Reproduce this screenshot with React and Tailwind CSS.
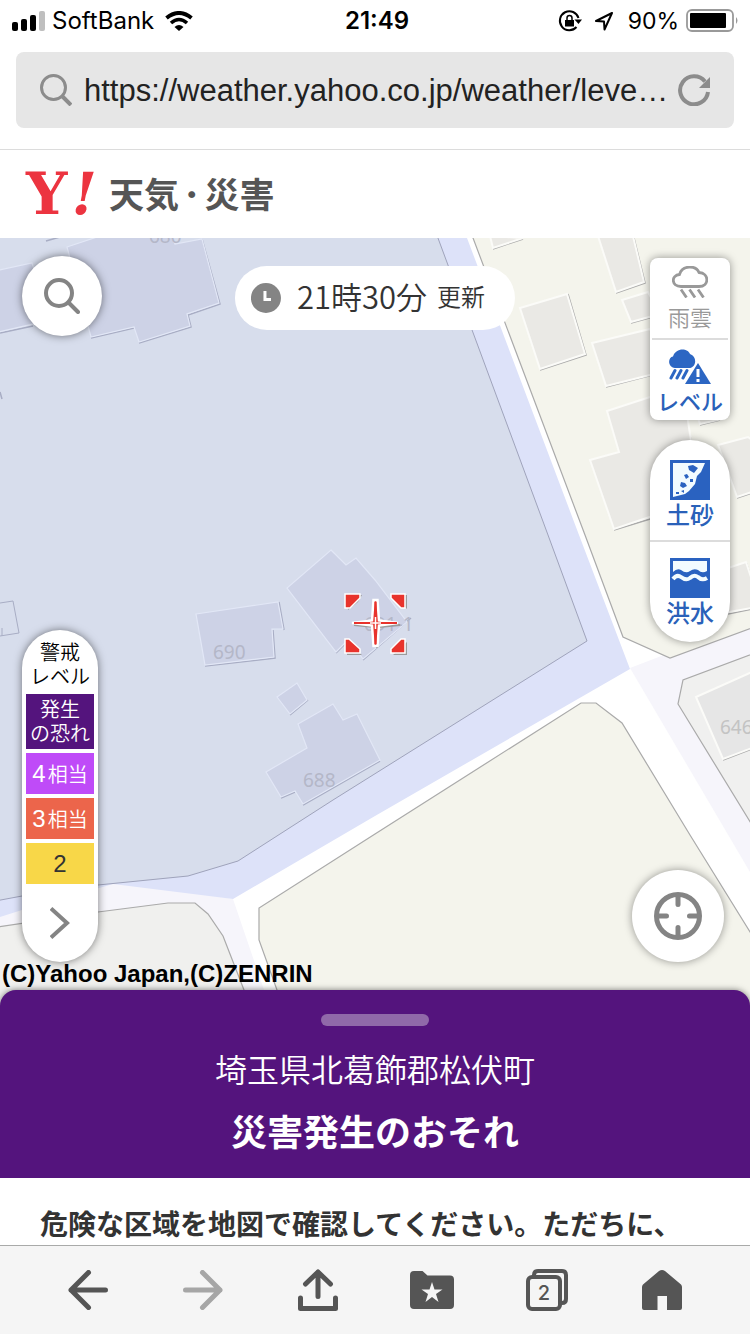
import React, { useState } from 'react';

const levels = [
  { label: ['発生', 'の恐れ'], box: 'h-[55px] pb-0.5 bg-[#54147d] text-white text-[20px] leading-6 font-[350]' },
  { num: '4', text: '相当', box: 'h-[41px] bg-[#bf4bf8] text-white' },
  { num: '3', text: '相当', box: 'h-[41px] bg-[#ec654b] text-white' },
  { num: '2', box: 'h-[41px] bg-[#f8d748] text-[#333]' },
];

const StatusBar = () => (
  <div className="grid grid-cols-3 items-center h-10 pt-0.5 px-3 font-['Inter','Noto_Sans_CJK_JP',sans-serif] text-[24px] text-black">
    <div className="flex items-center gap-[7px]">
      <svg className="w-[33px] h-5" viewBox="0 0 33 20">
        <rect x="0" y="11" width="6" height="9" rx="2" />
        <rect x="9" y="8" width="6" height="12" rx="2" />
        <rect x="18" y="4" width="6" height="16" rx="2" />
        <rect x="27" y="0" width="6" height="20" rx="2" fill="#bfbfbf" />
      </svg>
      <span>SoftBank</span>
      <svg className="w-7 h-5 ml-1" viewBox="0 0 28 20">
        <path d="M1.500 7 Q14 -3 26.500 7" fill="none" stroke="#000" strokeWidth="4" />
        <path d="M6 12 Q14 5 22 12" fill="none" stroke="#000" strokeWidth="3.600" />
        <path d="M9.500 16 Q14 12 18.500 16 L14 20Z" />
      </svg>
    </div>
    <div className="pl-1 text-center font-semibold">21:49</div>
    <div className="flex items-center justify-end">
      <svg className="w-6 h-6 mr-3" viewBox="0 0 24 24">
        <path d="M20.500 9 A9.500 9.500 0 1 0 18.500 18" fill="none" stroke="#000" strokeWidth="2" />
        <path d="M16.500 10.500 H24 L20.500 15Z" />
        <path d="M7 11 h9 v6.500 h-9z" />
        <path d="M9 11 V9 a2.500 2.500 0 0 1 5 0 V11" fill="none" stroke="#000" strokeWidth="1.500" />
      </svg>
      <svg className="w-5 h-5 mr-3.5" viewBox="0 0 20 20">
        <path d="M18 2 L2 10 L10 10.500 L10.500 18.500Z" fill="none" stroke="#000" strokeWidth="2" strokeLinejoin="round" />
      </svg>
      <span className="mr-[7px] text-[23px]">90%</span>
      <svg className="w-[53px] h-6 -mr-px" viewBox="0 0 53 24">
        <rect x="1" y="1" width="46" height="21" rx="5" fill="none" stroke="#999" strokeWidth="1.800" />
        <rect x="4" y="4" width="36" height="15" rx="1" />
        <path d="M50 8 q3 3.500 0 7z" fill="#999" />
      </svg>
    </div>
  </div>
);

const AddressBar = () => (
  <div className="px-4 pt-3 pb-[21px] border-b border-[#dcdcdc]">
    <div className="flex items-center h-[76px] rounded-lg bg-[#e6e6e6] pl-6 pr-6">
      <svg className="w-8 h-8 shrink-0" viewBox="0 0 32 32" fill="none" stroke="#8c8c8c">
        <circle cx="13.500" cy="13.500" r="12" strokeWidth="3" />
        <path d="M22 22 L31 31" strokeWidth="4" />
      </svg>
      <input
        aria-label="URL"
        readOnly
        value="https://weather.yahoo.co.jp/weather/leve…"
        className="flex-1 min-w-0 ml-3 pt-0.5 bg-transparent outline-none font-['Liberation_Sans',Arial,sans-serif] text-[31px] text-[#222]"
      />
      <button aria-label="再読み込み" className="shrink-0">
        <svg className="w-8 h-8" viewBox="0 0 32 32">
          <path d="M27 7.500 A14 14 0 1 0 30 18" fill="none" stroke="#8c8c8c" strokeWidth="4" />
          <path d="M32 3 V14 H21Z" fill="#8c8c8c" />
        </svg>
      </button>
    </div>
  </div>
);

const SiteHeader = () => (
  <header className="flex items-center h-[88px] px-[26px] bg-white">
    <a href="#top" className="flex items-center text-[35px] font-bold text-[#555]">
      <span className="flex gap-1 w-[83px] text-[#ec3440] font-['DejaVu_Serif',serif] text-[58px] leading-none font-bold">
        Y<i>!</i>
      </span>
      <span className="pb-0.5">天気<span className="mx-1">･</span>災害</span>
    </a>
  </header>
);

const shade = { fill: '#cdd2e6', stroke: '#e2e7f6', strokeWidth: 1.2 };
const plain = { fill: '#eae9e5', stroke: '#fbfbf8', strokeWidth: 2 };

const MapCanvas = () => (
  <svg className="absolute inset-0 w-full h-full" viewBox="0 238 750 768" preserveAspectRatio="xMidYMid slice">
    <rect x="0" y="238" width="750" height="768" fill="#fff" />
    {/* roads */}
    <path d="M630 668 L750 622 V872Z" fill="#f6f5fb" />
    <path d="M0 890 L113 880 L233 899 L264 990 L270 1006 H0Z" fill="#f6f5fb" />
    <path d="M0 238 H467 L579 535 L630 669 L375 816 L233 899 L113 884 L22 910 L0 917Z" fill="#dde2f9" />
    {/* blocks */}
    <path d="M-10 230 H435 L548 535 L587 641 L333 800 L238 861 L188 876 L98 885 L22 896 L-10 902Z" fill="#d7ddec" stroke="#9fa3bb" />
    <g fill="#f4f4ec" stroke="#aaa" strokeWidth="1.2">
      <path d="M470 230 L585 535 L623 637 L670 658 L760 625 V230Z" />
      <path d="M581 703 H596 L622 723 L690 835 L760 948 V1010 H284 L277 990 L259 940 V908 L375 834Z" />
      <path d="M760 651 L683 680 L678 704 L760 838Z" fill="#f0f0ef" />
      <path d="M-10 928 L98 912 L168 903 H195 L208 914 L223 936 L244 990 L250 1010 H-10Z" fill="#f0f0ee" />
    </g>
    {/* building drop edges */}
    <g fill="none" stroke="#a8adc4" strokeWidth="1.500">
      <path d="M202 239 L220 304 L188 315 L191 327 L139 343 M134 328 L91 338 M33 326 L0 333 M46 241 L60 237 M0 392 L2 399" />
      <path d="M279 602 L284 630 M273 630 L275 658 L205 666 M308 700 L290 715 M380 761 L303 805 M295 792 L281 798 M336 653 L345 644 M363 660 L411 618" />
      <path d="M0 603 L13 601 L19 633 L0 636 M2 628 V636" strokeWidth="1" />
    </g>
    <g fill="none" stroke="#aaa" strokeWidth="1.500">
      <path d="M493 249 L523 239 M616 293 L645 283 L634 238 M540 370 L586 355 L568 294 M631 323 L660 315 M606 387 L660 373 M614 530 L660 516 M686 420 L691 440 M700 425 L720 420 M737 498 L752 493 M728 614 L752 609 M750 574 L746 562 M723 760 L752 749" />
    </g>
    {/* buildings */}
    <g {...shade}>
      <path d="M67 247 L100 236 H172 L175 244 L202 239 L219 303 L187 314 L190 326 L139 342 L134 327 L91 337Z" />
      <path d="M-10 272 L32 263 L50 320 L-10 334Z" />
      <path d="M196 614 L278 602 L283 629 H272 L274 657 L205 665Z" />
      <path d="M331 550 L346 565 L356 558 L375 580 L407 622 L363 659 L352 644 L345 643 L336 652 L287 588Z" />
      <path d="M277 697 L297 683 L307 700 L290 714Z" />
      <path d="M298 724 L333 704 L343 720 L357 714 L380 760 L303 804 L295 791 L281 797 L266 772 L307 748Z" />
    </g>
    <g {...plain}>
      <path d="M490 236 L493 248 L523 238Z" />
      <path d="M598 236 L616 292 L644 282 L633 236Z" />
      <path d="M520 308 L567 294 L585 354 L540 369Z" />
      <path d="M622 300 L648 292 L660 314 L631 322Z" />
      <path d="M592 343 L650 329 L670 370 L606 386Z" />
      <path d="M607 411 L650 397 L683 388 L700 500 L614 529 L590 460 L619 452Z" />
      <path d="M698 418 L722 410 V419 L700 424Z" />
      <path d="M718 445 L748 437 L752 440 V492 L737 497Z" />
      <path d="M722 570 L746 562 L752 580 V608 L724 613Z" />
      <path d="M696 697 L752 672 V748 L723 759Z" fill="#e6e6e6" />
    </g>
    <g className="font-['Noto_Sans',sans-serif] text-[19px]" fill="#b4b7c8">
      <text x="149" y="243">680</text>
      <text x="213" y="659">690</text>
      <text x="303" y="787">688</text>
      <text x="364" y="631">691-1</text>
      <text x="720" y="734" fill="#c3c3c3">646</text>
    </g>
    {/* center mark */}
    <g fill="#9b9b9b" transform="translate(2 2)">
      <path d="M345 593 h15 l-4 7 l-10 8z M405 593 v14 l-14 -14z M345 653 h15 l-15 -13z M405 653 v-13 l-14 13z" />
      <path d="M352 623 L373 621 L375 600 L377 621 L398 623 L377 625 L375 646 L373 625Z" stroke="#9b9b9b" strokeWidth="2" />
    </g>
    <g fill="#e8332c" stroke="#fff" strokeWidth="1.500">
      <path d="M345 594 h15 v4 l-10 10 h-5z M405 594 v14 h-4 l-10 -10 v-4z M345 653 v-14 h4 l11 10 v4z M405 653 v-14 h-4 l-10 10 v4z" />
      <path d="M352 623 L372 620.500 L373.500 600 H377.500 L379 620.500 L398 623 L379 625.500 L377.500 646 H373.500 L372 625.500Z" strokeWidth="2.500" />
      <path d="M354 623 H397 M375.500 602 V644" stroke="#e8332c" strokeWidth="2" />
    </g>
    <path d="M370 623 H381 M375.500 617 V629" stroke="#fff" strokeWidth="1.500" />
  </svg>
);

const LayerSwitch = () => {
  const [layer, setLayer] = useState('level');
  return (
    <div className="absolute top-5 right-5 flex flex-col gap-5 w-20">
      <div className="flex flex-col rounded-lg bg-white shadow-[0_0_8px_rgba(0,0,0,0.4)]">
        <button
          aria-pressed={layer === 'rain'}
          onClick={() => setLayer('rain')}
          className="flex flex-col items-center h-20 pt-2 mx-0.5 text-[22px] leading-8 font-[350] text-[#999]"
        >
          <svg className="w-9 h-8 mb-0.5" viewBox="0 0 36 32" fill="none" stroke="#999" strokeWidth="2.800">
            <path d="M9 20.500 C-1 20.500 -1 9 7.500 8.500 C10 -1 24 -1 27 6.500 C37.500 7 37.500 20.500 27 20.500Z" />
            <path d="M9 23.500 L14.500 31.500 M17.500 23.500 L23 31.500 M26 23.500 L31.500 31.500" />
          </svg>
          雨雲
        </button>
        <button
          aria-pressed={layer === 'level'}
          onClick={() => setLayer('level')}
          className="flex flex-col items-center h-[82px] pt-[9px] mx-0.5 border-t-2 border-[#dcdcdc] text-[22px] leading-8 font-medium text-[#2a61b9]"
        >
          <svg className="w-[42px] h-[35px]" viewBox="0 0 42 35" fill="#2c66c3">
            <path d="M6 19 C-2 18 -1 8 4 7.500 C7 -2 19 -1 21 5 C29 8 27 19 20 19Z" />
            <path d="M6 21.500 L2 29 M12 21.500 L8 29 M18 21.500 L14 29" stroke="#2c66c3" strokeWidth="3" strokeLinecap="round" />
            <path d="M29 14 L42 35 H16Z" />
            <path d="M29 20 V28 M29 30 V33" stroke="#fff" strokeWidth="3" />
          </svg>
          レベル
        </button>
      </div>
      <div className="flex flex-col rounded-full bg-white text-[24px] leading-7 font-medium text-[#2a61b9] shadow-[0_0_8px_rgba(0,0,0,0.4)]">
        <button className="flex flex-col items-center h-[100px] pt-5">
          <svg className="w-10 h-10" viewBox="0 0 40 40">
            <rect width="40" height="40" fill="#2a62c0" />
            <path d="M3 3 H35 L31 12 L27 16 L25 24 L19 31 L15 34 L3 37Z" fill="#f2fbff" />
            <path d="M18 6 l5 -1 l5 3 l-4 5 l-5 -3z M14 15 l3 -1 l2 3 l-3 2z M20 19 l3 0 v3 h-3z M11 22 l4 1 l2 3 l-4 2 l-3 -2z M11 31 l3 -1 v3z M6 32 h3 v2 h-3z" fill="#2a62c0" />
          </svg>
          土砂
        </button>
        <button className="flex flex-col items-center h-[102px] pt-4 border-t-2 border-[#dcdcdc]">
          <svg className="w-10 h-10" viewBox="0 0 40 40">
            <rect width="40" height="40" fill="#2a62c0" />
            <path d="M3 3 H37 V13 Q32 16 28 12 Q24 10 20 13 Q16 16 11 12 Q7 10 3 14Z" fill="#f2fbff" />
            <path d="M3 21 Q7 16 11 19 Q16 23 20 20 Q24 16 28 19 Q32 23 37 20" fill="none" stroke="#f2fbff" strokeWidth="4" />
          </svg>
          洪水
        </button>
      </div>
    </div>
  );
};

const Legend = () => (
  <div className="absolute bottom-11 left-[22px] flex flex-col w-[76px] pt-2.5 rounded-full bg-white shadow-[0_0_8px_rgba(0,0,0,0.5)]">
    <p className="mb-1.5 text-center text-[20px] leading-6 font-[350] text-black">
      警戒<br />レベル
    </p>
    <ul className="flex flex-col gap-1 px-1">
      {levels.map((lv, i) => (
        <li key={i} className={`flex items-center justify-center text-center ${lv.box}`}>
          {lv.label ? (
            <span>{lv.label[0]}<br />{lv.label[1]}</span>
          ) : (
            <span className="flex items-center gap-0.5">
              <span className="font-['Liberation_Sans',Arial,sans-serif] text-[24px]">{lv.num}</span>
              {lv.text && <span className="text-[20px] font-[350]">{lv.text}</span>}
            </span>
          )}
        </li>
      ))}
    </ul>
    <button aria-label="凡例を開く" className="flex justify-center items-center h-[78px]">
      <svg className="w-5 h-8" viewBox="0 0 20 32" fill="none" stroke="#848484" strokeWidth="4">
        <path d="M1 1.500 L17 16 L1 30.500" />
      </svg>
    </button>
  </div>
);

const WeatherMap = () => (
  <main className="relative flex-1 min-h-[640px] overflow-hidden">
    <MapCanvas />
    <button
      aria-label="地点を検索"
      className="absolute top-[18px] left-[22px] flex items-center justify-center w-20 h-20 rounded-full bg-white shadow-[0_0_8px_rgba(0,0,0,0.5)]"
    >
      <svg className="w-9 h-9" viewBox="0 0 36 36" fill="none" stroke="#848484" strokeWidth="4" strokeLinecap="round">
        <circle cx="15" cy="15" r="13" />
        <path d="M25 25 L34 34" />
      </svg>
    </button>
    <div className="absolute top-7 left-1/2 -translate-x-1/2 flex items-center h-16 pl-4 pr-[30px] rounded-full bg-white whitespace-nowrap font-[350] text-[#333]">
      <svg className="w-[30px] h-[30px] mr-4" viewBox="0 0 30 30">
        <circle cx="15" cy="15" r="15" fill="#848484" />
        <path d="M14 8 V16.500 H20" fill="none" stroke="#fff" strokeWidth="3" />
      </svg>
      <span className="pb-1 text-[31px]">21時30分</span>
      <span className="ml-2.5 pb-1 text-[24px]">更新</span>
    </div>
    <LayerSwitch />
    <Legend />
    <button
      aria-label="現在地"
      className="absolute bottom-11 right-[26px] flex items-center justify-center w-[92px] h-[92px] rounded-full bg-white shadow-[0_0_8px_rgba(0,0,0,0.4)]"
    >
      <svg className="w-12 h-12" viewBox="0 0 48 48" fill="none" stroke="#848484" strokeWidth="5" strokeLinecap="round">
        <circle cx="24" cy="24" r="21.500" />
        <path d="M24 4 V12.500 M24 44 V35.500 M4 24 H12.500 M44 24 H35.500" />
      </svg>
    </button>
    <small className="absolute bottom-4 left-0.5 font-['Liberation_Sans',Arial,sans-serif] text-[24px] leading-8 font-bold text-black">
      (C)Yahoo Japan,(C)ZENRIN
    </small>
  </main>
);

const AlertSheet = () => (
  <section className="relative -mt-4">
    <div className="flex flex-col items-center pt-6 pb-[18px] rounded-t-2xl bg-[#54147d] text-white shadow-[0_0_6px_rgba(0,0,0,0.5)]">
      <button aria-label="詳細を開く" className="w-[108px] h-3 rounded-full bg-[#9069a9]" />
      <p className="mt-[18px] text-[32px] leading-[48px] font-[350]">埼玉県北葛飾郡松伏町</p>
      <h1 className="mt-2 text-[36px] leading-[60px] font-bold">災害発生のおそれ</h1>
    </div>
    <p className="relative px-10 pt-6 bg-white text-[28px] leading-[43px] font-bold text-[#333]">
      危険な区域を地図で確認してください。ただちに、
    </p>
  </section>
);

const Toolbar = () => (
  <nav className="relative grid grid-cols-6 items-center justify-items-center h-[89px] px-[31px] border-t border-[#a9aaa9] bg-[#f5f5f5] text-[#555]">
    <button aria-label="戻る">
      <svg className="w-10 h-10" viewBox="0 0 40 40" fill="none" stroke="currentColor" strokeWidth="5" strokeLinecap="round" strokeLinejoin="round">
        <path d="M20.500 2.500 L3 20 L20.500 37.500 M3 20 H37.500" />
      </svg>
    </button>
    <button aria-label="進む" className="text-[#a6a6a6]">
      <svg className="w-10 h-10" viewBox="0 0 40 40" fill="none" stroke="currentColor" strokeWidth="5" strokeLinecap="round" strokeLinejoin="round">
        <path d="M19.500 2.500 L37 20 L19.500 37.500 M37 20 H2.500" />
      </svg>
    </button>
    <button aria-label="共有">
      <svg className="w-10 h-[42px]" viewBox="0 0 40 42" fill="none" stroke="currentColor" strokeWidth="5" strokeLinecap="round" strokeLinejoin="round">
        <path d="M20 27.500 V3 M7.500 15 L20 3 L32.500 15 M2.500 29 V39.500 H37.500 V29" />
      </svg>
    </button>
    <button aria-label="ブックマーク">
      <svg className="w-11 h-[38px]" viewBox="0 0 44 38">
        <path d="M4 0 H12.500 L17.500 4.500 H40 Q44 4.500 44 8.500 V34 Q44 38 40 38 H4 Q0 38 0 34 V4 Q0 0 4 0Z" fill="currentColor" />
        <path d="M22 11 L24.500 18.500 H32.500 L26 23 L28.500 31 L22 26 L15.500 31 L18 23 L11.500 18.500 H19.500Z" fill="#f5f5f5" />
      </svg>
    </button>
    <button aria-label="タブ 2">
      <svg className="w-[42px] h-[42px]" viewBox="0 0 42 42">
        <path d="M8 8 V6 Q8 2 12 2 H36 Q40 2 40 6 V30 Q40 34 36 34 H34" fill="none" stroke="currentColor" strokeWidth="4" />
        <rect x="2" y="8" width="32" height="32" rx="4" fill="#f5f5f5" stroke="currentColor" strokeWidth="4" />
        <text x="18" y="31" textAnchor="middle" fill="currentColor" className="font-['Inter',sans-serif] text-[20px] font-medium">2</text>
      </svg>
    </button>
    <button aria-label="ホーム">
      <svg className="w-10 h-10" viewBox="0 0 40 40" fill="currentColor">
        <path d="M0 17 Q0 15.500 1 14.500 L17 1 Q20 -1 23 1 L39 14.500 Q40 15.500 40 17 V38 Q40 40 38 40 H25 V26 H15.500 V40 H2 Q0 40 0 38Z" />
      </svg>
    </button>
  </nav>
);

const App = () => (
  <div id="top" className="flex flex-col min-h-screen bg-white font-['Noto_Sans_CJK_JP',sans-serif]">
    <StatusBar />
    <AddressBar />
    <SiteHeader />
    <WeatherMap />
    <AlertSheet />
    <Toolbar />
  </div>
);

export default App;
